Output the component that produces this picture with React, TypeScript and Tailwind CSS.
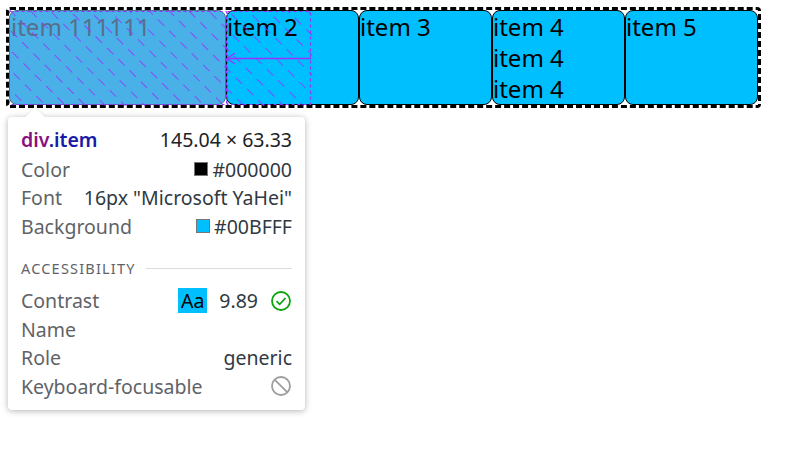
import React from "react";

const itemBase =
  "shrink-0 h-[95px] border rounded-[8px] text-[24px] leading-[31px]";

function Row({ label, children }: { label: string; children?: React.ReactNode }) {
  return (
    <div className="flex items-center justify-between h-[28.5px]">
      <span className="text-[#5f6368]">{label}</span>
      <span className="flex items-center text-[#303942]">{children}</span>
    </div>
  );
}

export default function App() {
  return (
    <div className="relative w-[786px] h-[451px] bg-white overflow-hidden" style={{ fontFamily: '"Noto Sans", "Open Sans", sans-serif' }}>
      <div className="absolute left-[6px] top-[7px] flex border-[3px] border-dashed border-black rounded-[4px] bg-white">
        <div className={itemBase + " w-[217px] bg-[#49B0E8] border-[#49708f] text-[#56708a] pl-[1px]"}>item 111111</div>
        <div className={itemBase + " w-[133px] bg-[#00BFFF] border-black text-black"}>item 2</div>
        <div className={itemBase + " w-[133px] bg-[#00BFFF] border-black text-black"}>item 3</div>
        <div className={itemBase + " w-[133px] bg-[#00BFFF] border-black text-black"}>item 4<br />item 4<br />item 4</div>
        <div className={itemBase + " w-[133px] bg-[#00BFFF] border-black text-black"}>item 5</div>
      </div>

      {/* flex overlay hatch */}
      <svg className="absolute left-[9px] top-[10px]" width="303" height="96" viewBox="0 0 303 96">
        <defs>
          <pattern id="hatch" width="14" height="16" patternUnits="userSpaceOnUse" patternTransform="rotate(-45)">
            <line x1="0" y1="0" x2="0" y2="16" stroke="#9b30ff" strokeWidth="2" strokeDasharray="9 7" />
          </pattern>
        </defs>
        <rect x="0" y="0" width="303" height="96" fill="url(#hatch)" opacity="0.8" />
        <rect x="0.5" y="1.5" width="217" height="93" fill="none" stroke="#9b30ff" strokeWidth="1" strokeDasharray="3 3" />
        <rect x="218.5" y="1.5" width="83" height="93" fill="none" stroke="#9b30ff" strokeWidth="1.2" strokeDasharray="3 3" />
        <line x1="218" y1="48.5" x2="302" y2="48.5" stroke="#9b30ff" strokeWidth="1.5" />
        <polyline points="226,43 218,48.5 226,54" fill="none" stroke="#9b30ff" strokeWidth="1.2" />
      </svg>

      {/* tooltip */}
      <div className="absolute left-[8px] top-[117px] w-[297px] h-[293px] bg-white rounded-[4px] shadow-[0_1px_6px_rgba(0,0,0,0.3)] px-[13px] pt-[8px] text-[19.5px]">
        <div className="absolute left-[20px] -top-[7px] w-[14px] h-[14px] bg-white rotate-45 shadow-[-1px_-1px_2px_rgba(0,0,0,0.08)]" />
        <div className="relative">
          <div className="flex items-center justify-between h-[30px]">
            <span className="font-semibold"><span className="text-[#881280]">div</span><span className="text-[#1a1aa6]">.item</span></span>
            <span className="text-[#202124]">145.04 × 63.33</span>
          </div>
          <Row label="Color">
            <span className="inline-block w-[14px] h-[14px] bg-black border border-[#777] mr-[4px]" />
            #000000
          </Row>
          <Row label="Font">16px "Microsoft YaHei"</Row>
          <Row label="Background">
            <span className="inline-block w-[14px] h-[14px] bg-[#00BFFF] border border-[#777] mr-[4px]" />
            #00BFFF
          </Row>
          <div className="flex items-center mt-[14px] mb-[4px] h-[28px] gap-[10px]">
            <span className="text-[14.5px] tracking-[1.2px] text-[#5f6368]">ACCESSIBILITY</span>
            <div className="flex-1 h-px bg-[#dadce0]" />
          </div>
          <Row label="Contrast">
            <span className="inline-flex items-center justify-center w-[29px] h-[25px] bg-[#00BFFF] text-black mr-[12px]">Aa</span>
            <span className="mr-[12px]">9.89</span>
            <svg width="22" height="22" viewBox="0 0 22 22">
              <circle cx="11" cy="11" r="9" fill="none" stroke="#0ca40c" strokeWidth="1.8" />
              <polyline points="6.5,11.2 9.7,14.3 15.5,8" fill="none" stroke="#0ca40c" strokeWidth="1.8" />
            </svg>
          </Row>
          <Row label="Name" />
          <Row label="Role">generic</Row>
          <Row label="Keyboard-focusable">
            <svg width="22" height="22" viewBox="0 0 22 22">
              <circle cx="11" cy="11" r="9" fill="none" stroke="#9e9e9e" strokeWidth="1.8" />
              <line x1="4.8" y1="4.8" x2="17.2" y2="17.2" stroke="#9e9e9e" strokeWidth="1.8" />
            </svg>
          </Row>
        </div>
      </div>
    </div>
  );
}
